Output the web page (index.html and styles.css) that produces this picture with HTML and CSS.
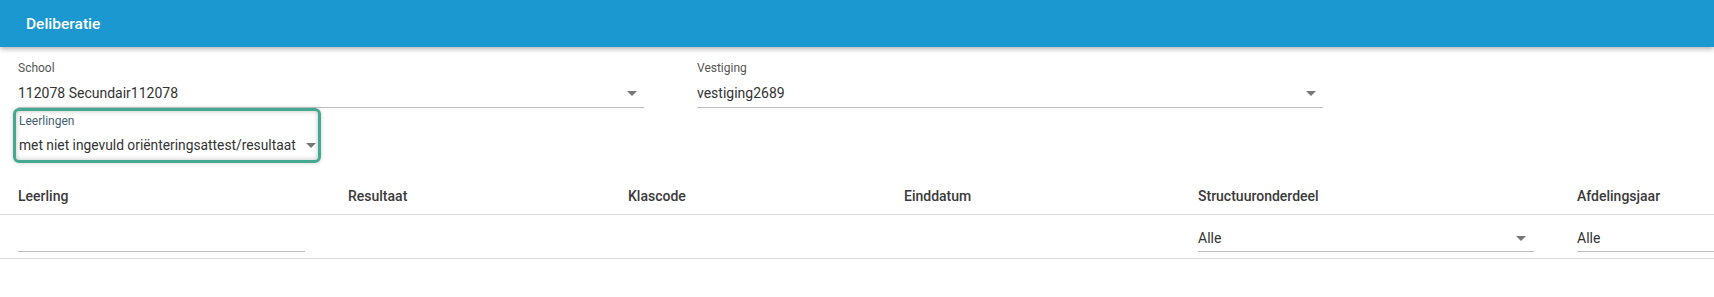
FILE: index.html
```html
<!DOCTYPE html>
<html lang="nl">
<head>
  <meta charset="UTF-8" />
  <title>Deliberatie</title>
  <link rel="stylesheet" href="styles.css">
</head>
<body>
  <!-- Top toolbar with page title -->
  <header class="toolbar">
    <span class="toolbar-title">Deliberatie</span>
  </header>

  <!-- Selection form: school, vestiging and leerlingen filter -->
  <section class="form">
    <div class="form-row">
      <div class="field">
        <div class="field-label">School</div>
        <div class="field-value">
          <span>112078 Secundair112078</span>
          <span class="arrow"></span>
        </div>
      </div>
      <div class="field">
        <div class="field-label">Vestiging</div>
        <div class="field-value">
          <span>vestiging2689</span>
          <span class="arrow"></span>
        </div>
      </div>
    </div>

    <!-- Highlighted leerlingen select -->
    <div class="highlight">
      <div class="field-label label-focus">Leerlingen</div>
      <div class="field-value plain">
        <span>met niet ingevuld oriënteringsattest/resultaat</span>
        <span class="arrow"></span>
      </div>
    </div>
  </section>

  <!-- Results table: header row and filter row -->
  <div class="table">
    <div class="table-row table-head">
      <div class="cell">Leerling</div>
      <div class="cell">Resultaat</div>
      <div class="cell">Klascode</div>
      <div class="cell">Einddatum</div>
      <div class="cell">Structuuronderdeel</div>
      <div class="cell">Afdelingsjaar</div>
    </div>
    <div class="table-row table-filter">
      <div class="cell cell-pad"><div class="filter-input"></div></div>
      <div class="cell"></div>
      <div class="cell"></div>
      <div class="cell"></div>
      <div class="cell cell-pad">
        <div class="filter-input">
          <span>Alle</span>
          <span class="arrow"></span>
        </div>
      </div>
      <div class="cell">
        <div class="filter-input"><span>Alle</span></div>
      </div>
    </div>
  </div>
</body>
</html>
```

FILE: styles.css
```css
/* Page base */
body {
  margin: 0;
  font-family: Roboto, "Liberation Sans", sans-serif;
  color: #333;
  background: white;
}

/* Blue toolbar at top */
.toolbar {
  height: 47px;
  background: #1c98d1;
  display: flex;
  align-items: center;
  padding-left: 26px;
  box-shadow: 0 2px 5px rgba(0,0,0,0.3);
  position: relative;     /* keep shadow above the form */
}

.toolbar-title {
  color: white;
  font-size: 15.5px;
  font-weight: 500;
}

/* Form area below toolbar */
.form {
  padding: 14px 18px 0 18px;
}

.form-row {
  display: flex;
  gap: 53px;              /* space between school and vestiging */
}

.field {
  width: 626px;
}

/* Small grey label above a value */
.field-label {
  font-size: 12px;
  line-height: 14px;
  color: #555;
}

.label-focus {
  color: #3f5f70;         /* slate tint on focused field */
}

/* Select value with underline */
.field-value {
  display: flex;
  align-items: center;
  justify-content: space-between;
  font-size: 14px;
  line-height: 20px;
  padding: 8px 0 4px 0;
  border-bottom: 1px solid #bbb;
  white-space: nowrap;
}

.field-value.plain {
  border-bottom: none;
  padding: 7px 0 5px 0;
  font-size: 13.8px;
}

/* Dropdown triangle */
.arrow {
  flex-shrink: 0;
  width: 0;
  height: 0;
  border-left: 5px solid transparent;
  border-right: 5px solid transparent;
  border-top: 5px solid #777;
  margin-right: 7px;
}

/* Green outlined box round leerlingen */
.highlight {
  width: 308px;
  box-sizing: border-box;
  margin-left: -5px;
  padding: 3px 2px 0 3px;
  border: 3px solid #45a890;
  border-radius: 6px;
  box-shadow: inset 0 0 5px rgba(0,0,0,0.25), 0 0 4px rgba(0,0,0,0.2);
}

.highlight .arrow {
  margin-right: 0;
  margin-left: 6px;
}

/* Table */
.table {
  margin-top: 15px;
}

.table-row {
  display: grid;
  grid-template-columns: 330px 280px 276px 294px 379px 1fr;
  border-bottom: 1px solid #dcdcdc;
}

.cell {
  padding-left: 18px;
}

.cell-pad {
  padding-right: 25px;
}

.table-head {
  height: 36px;
  align-items: center;
  font-size: 14px;
  font-weight: 500;
  color: #3a3a3a;
}

.table-filter {
  padding: 13px 0 6px 0;
}

/* Underlined filter inputs */
.filter-input {
  display: flex;
  align-items: center;
  justify-content: space-between;
  height: 20px;
  font-size: 14px;
  line-height: 20px;
  padding-bottom: 3px;
  border-bottom: 1px solid #bbb;
}

.filter-input .arrow {
  margin-right: 8px;
}
```
